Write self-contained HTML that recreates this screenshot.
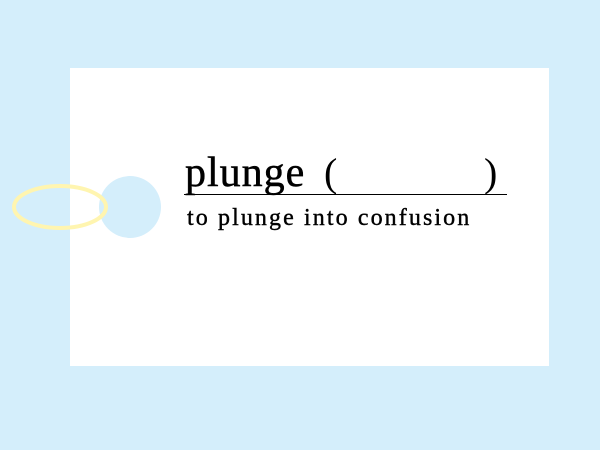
<!DOCTYPE html>
<html><head><style>
body{margin:0;width:600px;height:450px;background:#d4eefb;position:relative;overflow:hidden;font-family:"Liberation Serif",serif;}
.card{position:absolute;left:70px;top:68px;width:479px;height:298px;background:#fff;}
.t1{position:absolute;left:185px;top:150px;font-size:42px;color:#000;line-height:46px;white-space:nowrap;letter-spacing:1px;-webkit-text-stroke:0.5px #000}
.p{position:absolute;top:150px;font-size:40px;line-height:46px;color:#000}
.line{position:absolute;left:184px;top:194px;width:323px;height:1px;background:#000;}
.t2{position:absolute;left:187px;top:204px;font-size:24px;line-height:28px;color:#000;letter-spacing:2.1px;white-space:nowrap;-webkit-text-stroke:0.4px #000}
</style></head><body>
<div class="card"></div>
<svg style="position:absolute;left:0;top:0" width="600" height="450">
<circle cx="130" cy="207" r="31" fill="#d4eefb"/>
<ellipse cx="60" cy="207" rx="46" ry="21" fill="none" stroke="#fff5b0" stroke-width="4"/>
</svg>
<div class="t1">plunge</div>
<div class="p" style="left:324px">(</div>
<div class="p" style="left:484px">)</div>
<div class="line"></div>
<div class="t2">to plunge into confusion</div>
</body></html>
